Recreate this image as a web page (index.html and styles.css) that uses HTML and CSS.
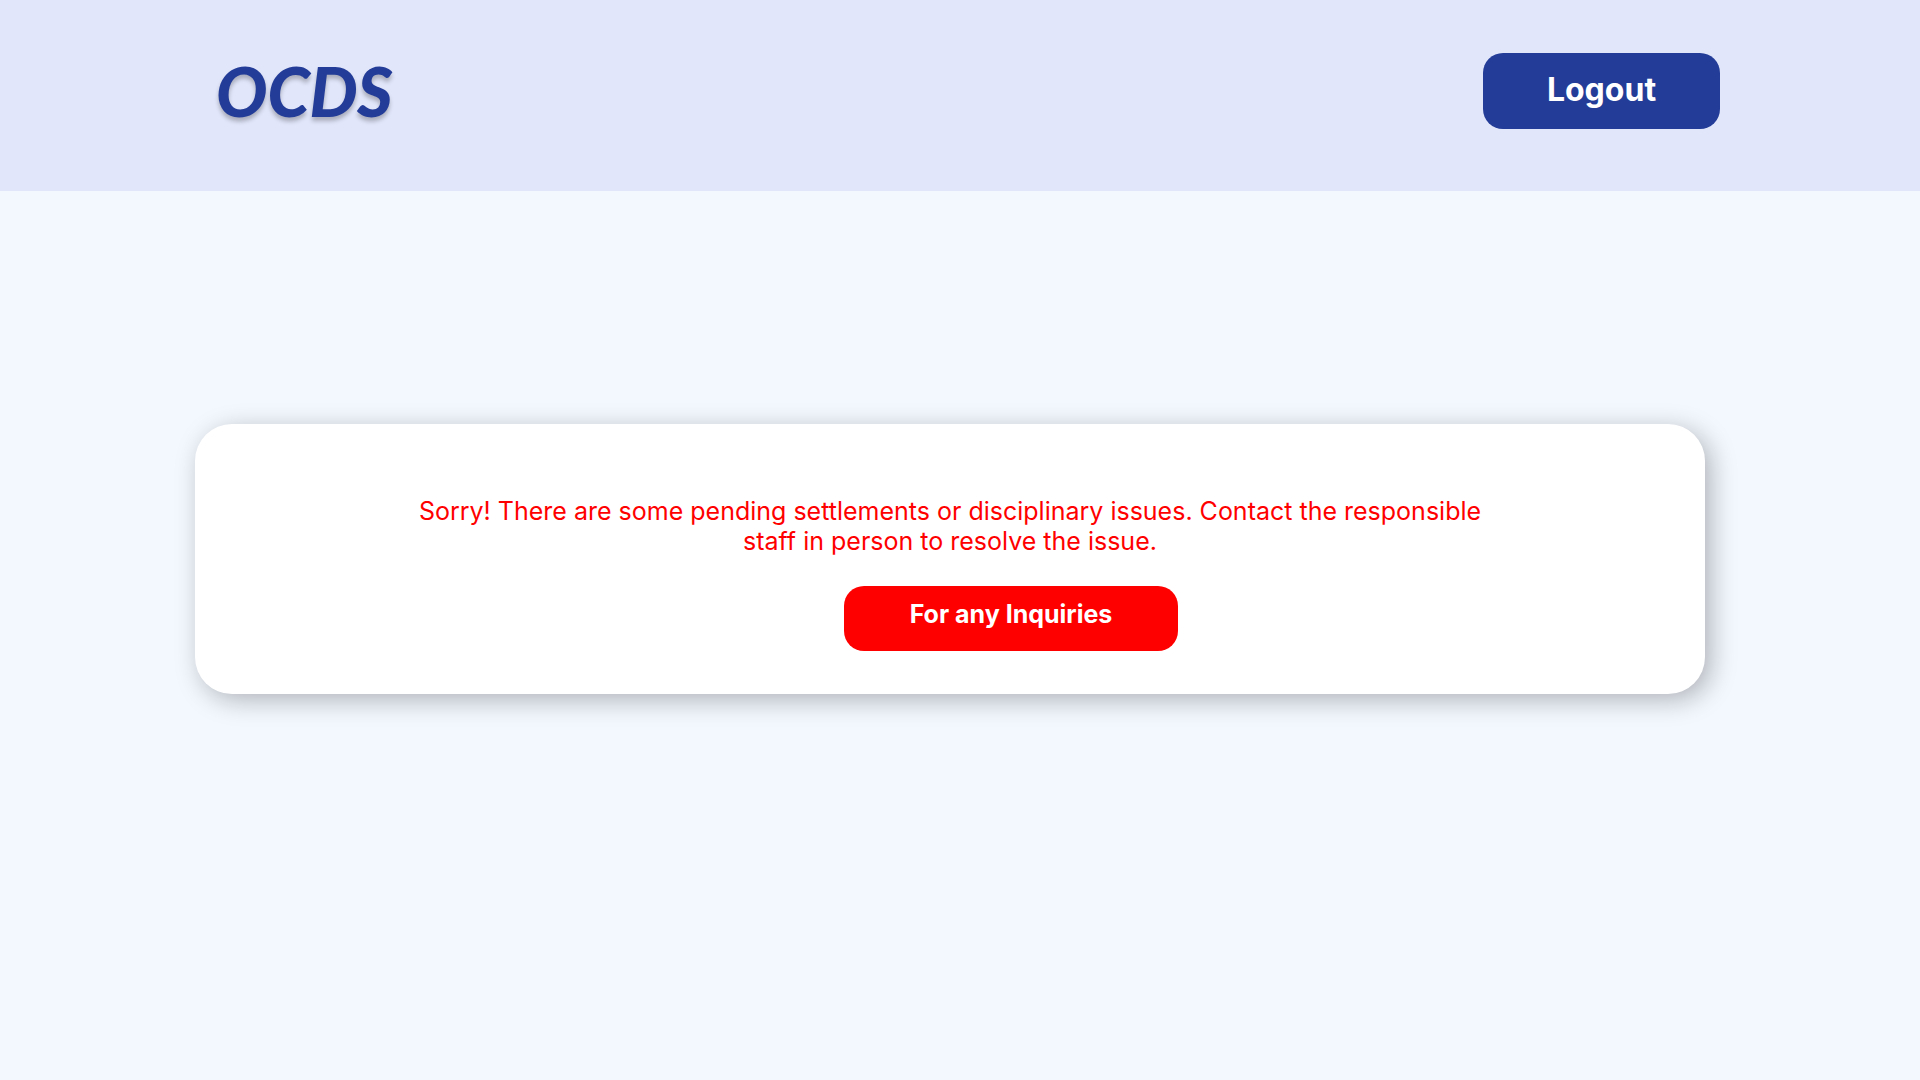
FILE: index.html
```html
<!DOCTYPE html>
<html lang="en">
<head>
  <meta charset="utf-8">
  <meta name="viewport" content="width=device-width, initial-scale=1">
  <title>OCDS</title>
  <link rel="stylesheet" href="styles.css">
</head>
<body>
  <header class="topbar">
    <a class="logo" href="#">OCDS</a>
    <button class="button button-logout" type="button">Logout</button>
  </header>
  <main class="content">
    <section class="card">
      <p class="message">Sorry! There are some pending settlements or disciplinary issues. Contact the responsible staff in person to resolve the issue.</p>
      <button class="button button-inquiries" type="button">For any Inquiries</button>
    </section>
  </main>
</body>
</html>
```

FILE: styles.css
```css
* {
  box-sizing: border-box;
}

body {
  margin: 0;
  min-height: 100vh;
  background: #f3f8ff;
  font-family: Inter, "Liberation Sans", sans-serif;
}

.topbar {
  display: flex;
  align-items: center;
  justify-content: space-between;
  padding: 53px 200px 62px 216px;
  background: #e1e6fa;
}

.logo {
  color: #233c97;
  font-family: Lato, sans-serif;
  font-size: 68px;
  font-style: italic;
  font-weight: 900;
  line-height: 72px;
  text-decoration: none;
  text-shadow: 0 4px 4px rgba(0, 0, 0, 0.25);
}

.button {
  border: 0;
  border-radius: 20px;
  color: #fff;
  font-family: inherit;
  font-weight: 700;
  cursor: pointer;
}

.button-logout {
  width: 237px;
  height: 76px;
  padding: 0 0 4px;
  background: #233c97;
  font-size: 32px;
}

.content {
  padding: 233px 215px 64px 195px;
}

.card {
  display: flex;
  flex-direction: column;
  align-items: center;
  gap: 30px;
  padding: 72px 64px 43px;
  border-radius: 37px;
  background: #fff;
  box-shadow: 6px 6px 26px rgba(0, 0, 0, 0.28);
}

.message {
  max-width: 1100px;
  margin: 0;
  color: #f00;
  font-size: 25px;
  font-feature-settings: "calt" 0, "liga" 0;
  line-height: 30px;
  text-align: center;
}

.button-inquiries {
  width: 334px;
  height: 65px;
  margin-left: 122px;
  padding: 0 0 10px;
  background: #f00;
  font-size: 25px;
}
```
